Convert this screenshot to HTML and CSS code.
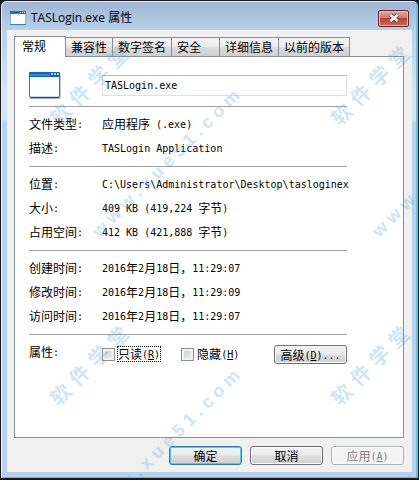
FILE: index.html
```html
<!DOCTYPE html>
<html lang="zh-CN">
<head>
<meta charset="utf-8">
<title>TASLogin.exe 属性</title>
<link rel="stylesheet" href="styles.css">
</head>
<body>
<main class="window">
  <header class="titlebar">
    <svg class="title-icon" viewBox="0 0 16 14" aria-hidden="true">
      <rect x=".5" y=".5" width="15" height="13" fill="#fff" stroke="#8db7d8"/>
      <path d="M0 0h16v3H0z" fill="#1d71bd"/>
      <path d="M10 1h1v1h-1zM12 1h1v1h-1zM14 1h1v1h-1z" fill="#d5e9fa"/>
      <path d="M0 13.5h16" stroke="#3480bb"/>
    </svg>
    <h1 class="title">TASLogin.exe 属性</h1>
    <button class="close" type="button" aria-label="关闭">
      <svg viewBox="0 0 12 10" aria-hidden="true"><path d="M2.500 2l7 6M9.500 2l-7 6" stroke="#5c4450" stroke-width="4.400"/><path d="M2.500 2l7 6M9.500 2l-7 6" stroke="#fff" stroke-width="2.600"/></svg>
    </button>
  </header>
  <form class="client">
    <nav class="tabs">
      <button class="tab tab-active" type="button">常规</button>
      <button class="tab" type="button">兼容性</button>
      <button class="tab" type="button">数字签名</button>
      <button class="tab tab-wide" type="button">安全</button>
      <button class="tab" type="button">详细信息</button>
      <button class="tab" type="button">以前的版本</button>
    </nav>
    <section class="panel">
      <div class="file-row">
        <svg class="file-icon" viewBox="0 0 32 27" aria-hidden="true">
          <path d="M1 2h31v25H1z" fill="#c3c8ce"/>
          <rect x=".5" y=".5" width="30" height="25" rx="1" fill="#fdfefe" stroke="#3c76b4"/>
          <path d="M0 1q0-1 1-1h29q1 0 1 1v4H0z" fill="#1262b3"/>
          <path d="M1 2h20v2H1z" fill="#2f8add"/>
          <path d="M22 1h2v2h-2zM25 1h2v2h-2zM28 1h2v2h-2z" fill="#a8d2f4"/>
          <path d="M1 25.500h29" stroke="#2c4f87" stroke-width="1.500"/>
        </svg>
        <input class="name" type="text" value="TASLogin.exe" aria-label="文件名">
      </div>
      <dl class="group">
        <dt>文件类型<span class="en">:</span></dt><dd>应用程序<span class="en"> (.exe)</span></dd>
        <dt>描述<span class="en">:</span></dt><dd><span class="en">TASLogin Application</span></dd>
      </dl>
      <dl class="group">
        <dt>位置<span class="en">:</span></dt><dd><span class="en">C:\Users\Administrator\Desktop\tasloginex</span></dd>
        <dt>大小<span class="en">:</span></dt><dd><span class="en">409 KB (419,224 </span>字节<span class="en">)</span></dd>
        <dt>占用空间<span class="en">:</span></dt><dd><span class="en">412 KB (421,888 </span>字节<span class="en">)</span></dd>
      </dl>
      <dl class="group">
        <dt>创建时间<span class="en">:</span></dt><dd><span class="en">2016</span>年<span class="en">2</span>月<span class="en">18</span>日，<span class="en">11:29:07</span></dd>
        <dt>修改时间<span class="en">:</span></dt><dd><span class="en">2016</span>年<span class="en">2</span>月<span class="en">18</span>日，<span class="en">11:29:09</span></dd>
        <dt>访问时间<span class="en">:</span></dt><dd><span class="en">2016</span>年<span class="en">2</span>月<span class="en">18</span>日，<span class="en">11:29:07</span></dd>
      </dl>
      <div class="group attributes">
        <span class="attr-label">属性<span class="en">:</span></span>
        <div class="attr-controls">
          <div class="check"><input type="checkbox" id="readonly"><label class="focused" for="readonly">只读<span class="en">(<u>R</u>)</span></label></div>
          <div class="check"><input type="checkbox" id="hidden"><label for="hidden">隐藏<span class="en">(<u>H</u>)</span></label></div>
          <button class="button advanced" type="button">高级<span class="en">(<u>D</u>)...</span></button>
        </div>
      </div>
    </section>
    <footer class="actions">
      <button class="button default" type="button">确定</button>
      <button class="button" type="button">取消</button>
      <button class="button" type="button" disabled>应用<span class="en">(<u>A</u>)</span></button>
    </footer>
  </form>
  <div class="watermarks" aria-hidden="true">
    <div class="mark brand m1"><span>软</span><span>件</span><span>学</span><span>堂</span></div>
    <div class="mark brand m2"><span>软</span><span>件</span><span>学</span><span>堂</span></div>
    <div class="mark brand m3"><span>软</span><span>件</span><span>学</span><span>堂</span></div>
    <div class="mark brand m4"><span>软</span><span>件</span><span>学</span><span>堂</span></div>
    <div class="mark site m5"><span>w</span><span>w</span><span>w</span><span>.</span><span>x</span><span>u</span><span>e</span><span>5</span><span>1</span><span>.</span><span>c</span><span>o</span><span>m</span></div>
    <div class="mark site m6"><span>w</span><span>.</span><span>x</span><span>u</span><span>e</span><span>5</span><span>1</span><span>.</span><span>c</span><span>o</span><span>m</span></div>
    <div class="mark site m7"><span>w</span><span>w</span><span>w</span></div>
    <div class="mark site m8"><span>w</span></div>
  </div>
</main>
</body>
</html>
```
FILE: styles.css
```css
* { box-sizing: border-box; }

body {
  margin: 0;
  background: #14181c;
  color: #000;
  font: 12px/24px "Noto Sans CJK SC", sans-serif;
}

button, input {
  margin: 0;
  color: inherit;
  font: inherit;
}

.en {
  font-family: "DejaVu Sans Mono", monospace;
  font-size: 10px;
  line-height: 12px;
  vertical-align: 1px;
  white-space: pre;
}

.window {
  position: relative;
  display: flex;
  flex-direction: column;
  min-height: 100vh;
  padding: 0 6px 6px;
  overflow: hidden;
  border: 1px solid #14181c;
  border-width: 1px 1px 2px 1px;
  border-radius: 6px 6px 0 0;
  background: linear-gradient(#9db6d4, #b9d1ea 30px, #d5e3f3 90px, #d5e3f3 118px, #b9d1ec 122px);
  box-shadow: inset 1px 1px #e8f4fc, inset -2px -1px #54c8ea;
}

.titlebar {
  display: flex;
  align-items: center;
  height: 29px;
  padding: 5px 3px 0;
}

.title-icon {
  width: 16px;
  height: 14px;
}

.title {
  flex: 1;
  margin: 0 0 0 5px;
  font: 12px/20px "Open Sans", "Noto Sans CJK SC", sans-serif;
}

.close {
  display: flex;
  align-items: center;
  justify-content: center;
  width: 31px;
  height: 17px;
  padding: 0;
  border: 1px solid #5e2832;
  border-radius: 2px;
  background: linear-gradient(#e2a69c, #d2796c 45%, #bd4131 50%, #d26a52);
  box-shadow: inset 0 0 0 1px #e9b9ae;
}

.close svg {
  width: 12px;
  height: 10px;
}

.client {
  display: flex;
  flex: 1;
  flex-direction: column;
  padding: 6px 8px 7px 7px;
  background: #f0f0f0;
}

.tabs {
  display: flex;
  align-items: flex-end;
}

.tab {
  height: 19px;
  margin-left: -1px;
  padding: 0 5px;
  border: 1px solid #8b8e94;
  border-bottom: 0;
  background: linear-gradient(#f3f3f3, #ebebeb 50%, #dcdcdc 52%, #cfcfcf);
  line-height: 18px;
  text-align: left;
}

.tab-wide { min-width: 49px; }

.tab-active {
  position: relative;
  min-width: 52px;
  height: 21px;
  margin: 0 0 -1px;
  padding: 0 7px 3px;
  background: #fff;
}

.panel {
  flex: 1;
  padding: 0 56px 0 14px;
  border: 1px solid #8b8e94;
  background: #fff;
}

.file-row {
  display: grid;
  grid-template-columns: 73px 1fr;
  align-items: center;
  height: 49px;
  padding-top: 8px;
}

.file-icon {
  width: 32px;
  height: 27px;
}

.name {
  width: 100%;
  height: 21px;
  padding: 0 2px;
  border: 1px solid #dcdfe3;
  border-top-color: #b4b8bf;
  background: #fff;
  font: 10px/18px "DejaVu Sans Mono", monospace;
}

.group {
  display: grid;
  grid-template-columns: 73px 1fr;
  grid-auto-rows: 24px;
  margin: 0;
  padding: 5px 0 6px;
  border-top: 1px solid #a0a0a0;
  white-space: nowrap;
}

.group dd { margin: 0; }

.attr-controls {
  display: flex;
  align-items: center;
  gap: 20px;
  padding-top: 4px;
}

.check {
  display: flex;
  align-items: center;
  gap: 2px;
}

.check input {
  appearance: none;
  width: 13px;
  height: 13px;
  border: 1px solid #8e8f8f;
  background: linear-gradient(135deg, #c5cad0, #f4f5f6);
  box-shadow: inset 0 0 0 2px #f1f1f1;
}

.check label {
  border: 1px solid transparent;
  line-height: 13px;
}

.check .focused { border: 1px dotted #000; }

.button {
  width: 73px;
  height: 19px;
  padding: 0;
  border: 1px solid #707070;
  border-radius: 3px;
  background: linear-gradient(#f2f2f2, #ebebeb 48%, #dddddd 52%, #cfcfcf);
  box-shadow: inset 0 0 0 1px #fafafa;
  line-height: 17px;
  text-align: center;
  white-space: nowrap;
}

.advanced { margin-left: auto; }

.default {
  border-color: #2c7fa8;
  box-shadow: inset 0 0 0 1px #4bc9f0;
}

.button:disabled {
  border-color: #adb2b5;
  background: #f4f4f4;
  color: #838383;
}

.actions {
  display: flex;
  justify-content: flex-end;
  gap: 8px;
  padding-top: 8px;
}

.watermarks {
  position: absolute;
  inset: 0;
  overflow: hidden;
  pointer-events: none;
}

.mark {
  position: absolute;
  display: flex;
  color: rgba(85, 165, 215, 0.3);
  font-weight: bold;
  line-height: 20px;
  transform: rotate(-45deg);
  transform-origin: 0 50%;
}

.brand {
  gap: 7px;
  font-size: 20px;
}

.site {
  gap: 5px;
  font-family: "Liberation Sans", sans-serif;
  font-size: 18px;
}

.m1 { left: 52px; top: 110px; }
.m2 { left: 333px; top: 110px; }
.m3 { left: 52px; top: 390px; }
.m4 { left: 333px; top: 390px; }
.m5 { left: 94px; top: 223px; }
.m6 { left: 121px; top: 476px; }
.m7 { left: 374px; top: 223px; }
.m8 { left: 401px; top: 476px; }
```
